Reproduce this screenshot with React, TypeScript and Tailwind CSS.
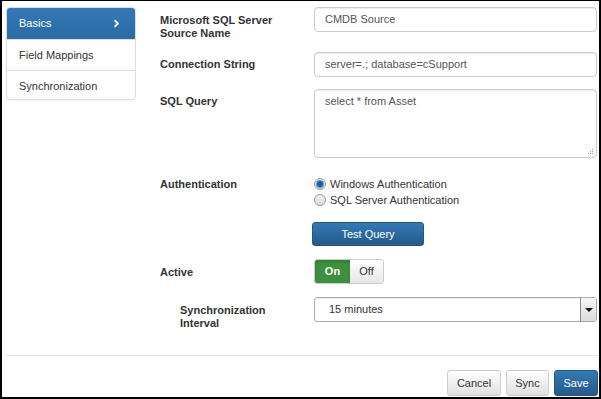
import { ChevronRight } from 'lucide-react';

const font = "font-['Liberation_Sans',Arial,sans-serif]";

function Input({ value }: { value: string }) {
  return (
    <div className="h-[25px] w-[283px] rounded-[4px] border border-[#ccc] bg-white pl-[10px] text-[11px] leading-[23px] text-[#555] shadow-[inset_0_1px_1px_rgba(0,0,0,0.075)]">
      {value}
    </div>
  );
}

function Radio({ checked, label }: { checked?: boolean; label: string }) {
  return (
    <div className="flex h-[16px] items-center">
      <span className="flex h-[12px] w-[12px] items-center justify-center rounded-full border border-[#9a9a9a] bg-gradient-to-b from-[#f4f4f4] to-[#d8d8d8]">
        {checked && <span className="h-[6px] w-[6px] rounded-full bg-[#1f5f9e] shadow-[0_0_0_1px_#5aa0d8]" />}
      </span>
      <span className="ml-[4px] text-[11px] text-[#333]">{label}</span>
    </div>
  );
}

export default function App() {
  const sidebar = ['Basics', 'Field Mappings', 'Synchronization'];

  return (
    <div className={`${font} h-[399px] w-[601px] overflow-hidden border-t border-r-2 border-b-2 border-l-2 border-black bg-white`}>
      <div className="flex h-[321px] pl-[4px] pt-[6px]">
        {/* Sidebar */}
        <div className="h-[93px] w-[130px] overflow-hidden rounded-[4px] border border-[#ddd] shadow-[0_1px_2px_rgba(0,0,0,0.05)]">
          {sidebar.map((item, i) => (
            <div
              key={item}
              className={
                i === 0
                  ? 'flex h-[31px] items-center justify-between bg-gradient-to-b from-[#337ab7] to-[#2b6aa3] pl-[12px] pr-[13px] text-[11px] text-white'
                  : 'flex h-[31px] items-center border-t border-[#ddd] pl-[12px] text-[11px] text-[#333]'
              }
            >
              {item}
              {i === 0 && <ChevronRight size={11} strokeWidth={4} color="white" />}
            </div>
          ))}
        </div>

        {/* Form */}
        <div className="ml-[24px] flex flex-col">
          <div className="flex">
            <div className="w-[154px] pt-[7px] text-[11px] font-bold leading-[13px] text-[#333]">
              Microsoft SQL Server
              <br />
              Source Name
            </div>
            <div className="h-[24px]">
              <Input value="CMDB Source" />
            </div>
          </div>

          <div className="mt-[12px] flex">
            <div className="w-[154px] pt-[6px] text-[11px] font-bold leading-[13px] text-[#333]">Connection String</div>
            <Input value="server=.; database=cSupport" />
          </div>

          <div className="mt-[12px] flex">
            <div className="w-[154px] pt-[6px] text-[11px] font-bold leading-[13px] text-[#333]">SQL Query</div>
            <div className="relative h-[69px] w-[283px] rounded-[4px] border border-[#ccc] bg-white pl-[10px] pt-[5px] text-[11px] leading-[13px] text-[#555] shadow-[inset_0_1px_1px_rgba(0,0,0,0.075)]">
              select * from Asset
              <svg className="absolute bottom-[2px] right-[2px]" width="7" height="7" viewBox="0 0 7 7">
                <rect x="5" y="1" width="1" height="1" fill="#999" />
                <rect x="3" y="3" width="1" height="1" fill="#999" />
                <rect x="5" y="3" width="1" height="1" fill="#999" />
                <rect x="1" y="5" width="1" height="1" fill="#999" />
                <rect x="3" y="5" width="1" height="1" fill="#999" />
                <rect x="5" y="5" width="1" height="1" fill="#999" />
              </svg>
            </div>
          </div>

          <div className="mt-[18px] flex">
            <div className="w-[154px] text-[11px] font-bold leading-[16px] text-[#333]">Authentication</div>
            <div className="flex flex-col">
              <Radio checked label="Windows Authentication" />
              <Radio label="SQL Server Authentication" />
            </div>
          </div>

          <div className="mt-[14px] flex">
            <div className="w-[152px]" />
            <button className="h-[24px] w-[112px] rounded-[3px] border border-[#245580] bg-gradient-to-b from-[#337ab7] to-[#265a88] text-[11px] text-white">
              Test Query
            </button>
          </div>

          <div className="mt-[13px] flex items-center">
            <div className="w-[154px] pt-[2px] text-[11px] font-bold leading-[13px] text-[#333]">Active</div>
            <div className="flex h-[25px] overflow-hidden rounded-[3px] border border-[#ccc]">
              <div className="flex w-[35px] items-center justify-center bg-[#3e8f3e] text-[11px] font-bold text-white shadow-[inset_0_2px_3px_rgba(0,0,0,0.15)]">
                On
              </div>
              <div className="flex w-[33px] items-center justify-center bg-gradient-to-b from-[#fff] to-[#e6e6e6] text-[11px] text-[#333]">
                Off
              </div>
            </div>
          </div>

          <div className="mt-[13px] flex">
            <div className="w-[154px] pl-[20px] pt-[7px] text-[11px] font-bold leading-[13px] text-[#333]">
              Synchronization
              <br />
              Interval
            </div>
            <div className="flex h-[25px] w-[283px] items-stretch rounded-[3px] border border-[#aaa] bg-white shadow-[inset_0_1px_1px_rgba(0,0,0,0.075)]">
              <div className="flex-1 pl-[14px] text-[11px] leading-[23px] text-[#333]">15 minutes</div>
              <div className="flex w-[16px] items-center justify-center border-l border-[#888] bg-gradient-to-b from-[#f6f6f6] to-[#dcdcdc]">
                <svg width="8" height="4" viewBox="0 0 8 4">
                  <path d="M0 0h8L4 4z" fill="#111" />
                </svg>
              </div>
            </div>
          </div>
        </div>
      </div>

      {/* Footer */}
      <div className="ml-[4px] mt-[33px] border-t border-[#e5e5e5]" />
      <div className="mt-[14px] flex justify-end gap-[5px] pr-[1px]">
        <button className="h-[26px] w-[54px] rounded-[3px] border border-[#ccc] bg-gradient-to-b from-[#fff] to-[#e0e0e0] text-[11px] text-[#333]">
          Cancel
        </button>
        <button className="h-[26px] w-[43px] rounded-[3px] border border-[#ccc] bg-gradient-to-b from-[#fff] to-[#e0e0e0] text-[11px] text-[#333]">
          Sync
        </button>
        <button className="h-[26px] w-[44px] rounded-[3px] border border-[#245580] bg-gradient-to-b from-[#337ab7] to-[#265a88] text-[11px] text-white">
          Save
        </button>
      </div>
    </div>
  );
}
